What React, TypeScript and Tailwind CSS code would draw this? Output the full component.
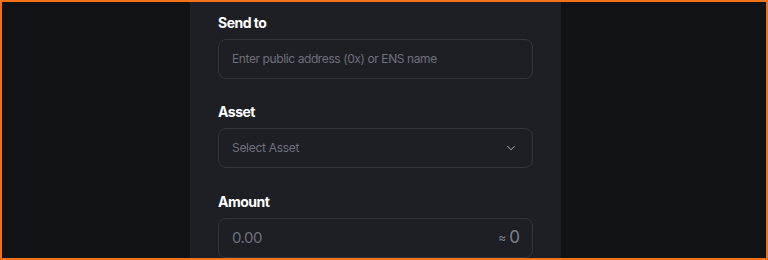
import { ChevronDown } from "lucide-react";

const Field = ({ label, children }: { label: string; children: React.ReactNode }) => (
  <div className="flex flex-col gap-[6px]">
    <label className="text-[14px] leading-[20px] font-bold text-white tracking-[-0.5px]">{label}</label>
    {children}
  </div>
);

export default function App() {
  return (
    <div
      className="w-[768px] h-[260px] overflow-hidden border-2 border-[#f47318] bg-[#121316] flex"
      style={{ fontFamily: "Inter, 'Noto Sans', sans-serif" }}
    >
      <div className="ml-[188px] w-[371px] h-full bg-[#1e1f24] px-7 pt-[11px] flex flex-col">
        <Field label="Send to">
          <div className="h-[40px] rounded-lg border border-[#33353b] flex items-center px-[13px]">
            <span className="text-[12px] text-[#6d717b] tracking-[-0.4px]">
              Enter public address (0x) or ENS name
            </span>
          </div>
        </Field>
        <div className="mt-[23px]">
          <Field label="Asset">
            <div className="h-[40px] rounded-lg border border-[#33353b] flex items-center justify-between pl-[13px] pr-[14px]">
              <span className="text-[12px] text-[#6d717b] tracking-[-0.3px]">Select Asset</span>
              <ChevronDown className="w-[14px] h-[14px] text-[#8a8e98]" strokeWidth={1.8} />
            </div>
          </Field>
        </div>
        <div className="mt-[24px]">
          <Field label="Amount">
            <div className="h-[40px] rounded-lg border border-[#33353b] flex items-center justify-between pl-[13px] pr-[12px]">
              <span className="text-[15px] text-[#6d717b] tracking-[-0.5px]">0.00</span>
              <span className="flex items-center gap-[3px] text-[#7d818b]">
                <span className="text-[12px]">≈</span>
                <span className="text-[17px]">0</span>
              </span>
            </div>
          </Field>
        </div>
      </div>
    </div>
  );
}
